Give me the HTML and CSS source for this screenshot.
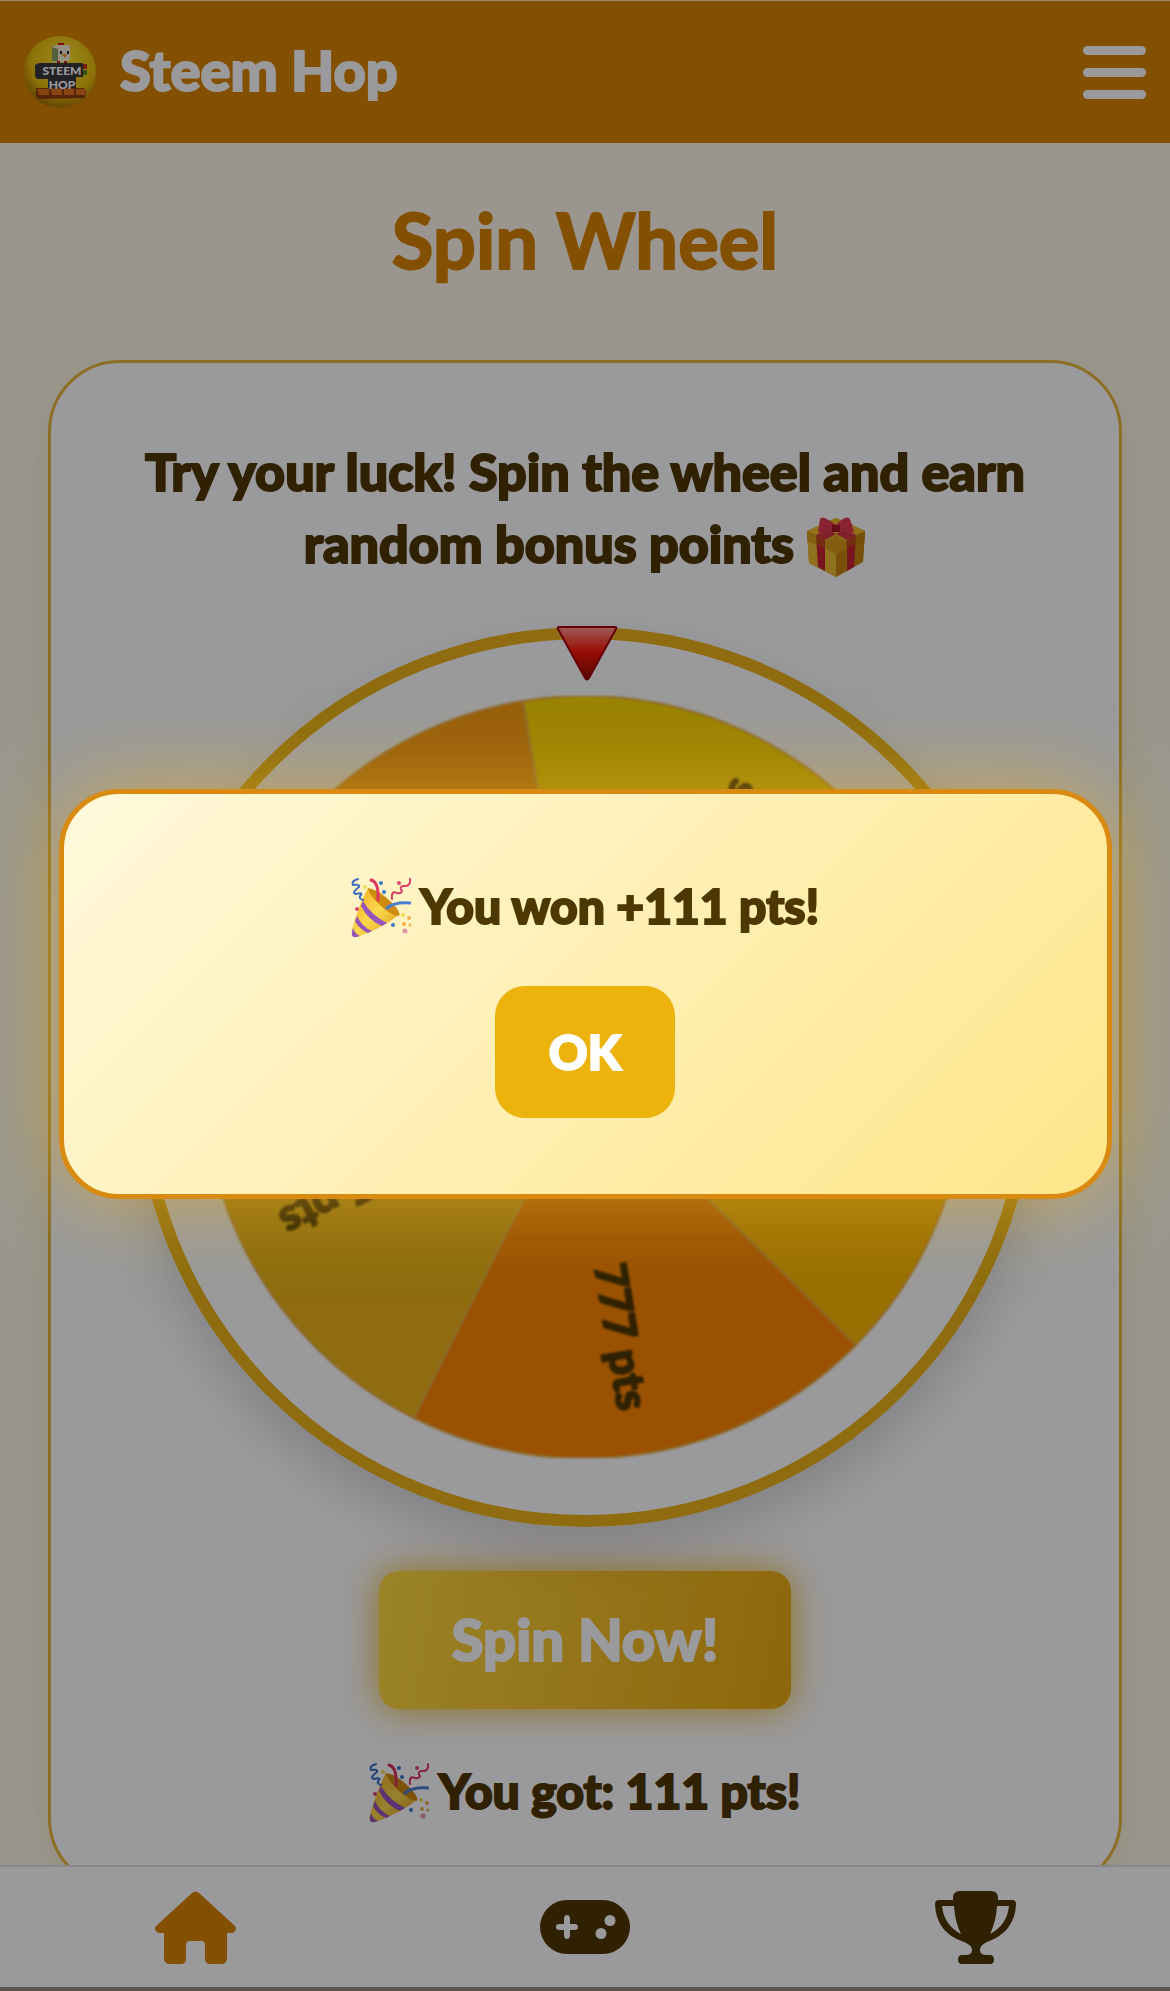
FILE: index.html
```html
<!DOCTYPE html>
<html lang="en">
<head>
    <meta charset="UTF-8">
    <meta name="viewport" content="width=device-width, initial-scale=1.0">
    <title>Steem Hop</title>
    <link rel="stylesheet" href="styles.css">
</head>
<body>
    <!-- Shared drawings -->
    <svg class="sprite" aria-hidden="true">
        <defs>
            <linearGradient id="coneFill" x1="0" y1="0" x2="1" y2="1">
                <stop offset="0" stop-color="#f0a818"/>
                <stop offset=".5" stop-color="#fbd84e"/>
                <stop offset="1" stop-color="#d8930c"/>
            </linearGradient>
        </defs>
        <symbol id="party" viewBox="0 0 60 60">
            <path d="M17 10 L49 36 Q30 51 6 59 Q-1 60 1 52 Q7 29 17 10Z" fill="url(#coneFill)"/>
            <path d="M17 10 Q26 11 38 22 Q50 33 48 38 Q39 37 29 27 Q18 17 17 10Z" fill="#cf8b10"/>
            <path d="M12 23 Q20 37 36 45 L31 48 Q17 42 10 28Z" fill="#9655bd"/>
            <path d="M6 38 Q11 49 21 53 L17 55 Q8 51 4 43Z" fill="#9655bd"/>
            <path d="M2 50 Q4 56 9 58 L5 59 Q0 60 1 54Z" fill="#9655bd"/>
            <g fill="none" stroke-linecap="round">
                <path d="M7 1 Q0 3 2 7 Q9 6 8 9 Q0 15 5 16 Q13 14 9 18 Q8 21 12 22" stroke="#3a6fc4" stroke-width="2"/>
                <path d="M20 2 Q28 4 27 22" stroke="#db3560" stroke-width="3"/>
                <path d="M59 1 Q60 9 52 8 Q48 9 51 13 Q50 16 46 15 Q40 12 41 21" stroke="#dc3b66" stroke-width="2"/>
                <path d="M36 30 Q43 24 59 25" stroke="#4a7fd0" stroke-width="3"/>
            </g>
            <g fill="#3a79cc"><circle cx="30" cy="5" r="2"/><circle cx="33" cy="14" r="2"/><circle cx="42" cy="47" r="2"/></g>
            <g fill="#d94870"><circle cx="48" cy="5" r="2"/><circle cx="6" cy="31" r="2"/><circle cx="54" cy="53" r="2.5" fill="#e295a8"/></g>
            <g fill="#efb24a"><circle cx="58" cy="40" r="2"/><circle cx="53" cy="46" r="2"/><circle cx="59" cy="47" r="1.5"/><circle cx="52" cy="37" r="2" fill="#f3da55"/><circle cx="14" cy="9" r="2" fill="#f3da55"/></g>
        </symbol>
    </svg>

    <div class="app">
        <header class="topbar">
            <a class="brand" href="#">
                <svg class="brand-logo" viewBox="0 0 72 72" aria-hidden="true">
                    <defs>
                        <radialGradient id="ball" cx=".55" cy=".35" r=".65">
                            <stop offset="0" stop-color="#ffe62e"/>
                            <stop offset=".7" stop-color="#e9bd0c"/>
                            <stop offset="1" stop-color="#a87405"/>
                        </radialGradient>
                    </defs>
                    <circle cx="36" cy="36" r="36" fill="url(#ball)"/>
                    <path d="M34 7h6v4h-6z" fill="#c8200f"/>
                    <path d="M28 11l4-2h14v15l-4 2H28z" fill="#f5eed2"/>
                    <path d="M28 11l6 2v12h-6z" fill="#8c9c66"/>
                    <path d="M36 15h2v3h-2zM43 15h2v3h-2z" fill="#222"/>
                    <path d="M38 18h5l-2 4z" fill="#f08a1c"/>
                    <path d="M33 25h3v3h-3zM40 25h3v3h-3z" fill="#c8200f"/>
                    <path d="M11 29l4-2h44v14h-7v13H24V43H13l-2-3z" fill="#38383a"/>
                    <path d="M59 28h4v5h-4z" fill="#c23a10"/><path d="M59 34h4v5h-4z" fill="#4c8a24"/>
                    <path d="M12 52h48l2 3-1 7-46 1-3-3z" fill="#8e3d0c"/>
                    <path d="M13 53h12v6H15zM27 53h11v6H28zM40 53h10v6H40zM52 53h9v6h-9z" fill="#e2741c"/>
                    <text x="38" y="39" text-anchor="middle" class="logo-text">STEEM</text>
                    <text x="38" y="53" text-anchor="middle" class="logo-text">HOP</text>
                </svg>
                <span class="brand-name">Steem Hop</span>
            </a>
            <button class="menu-btn" type="button" aria-label="Menu">
                <span></span><span></span><span></span>
            </button>
        </header>

        <main class="content">
            <h1>Spin Wheel</h1>

            <section class="card">
                <p class="lead">Try your luck! Spin the wheel and earn random bonus points
                    <svg class="emoji" viewBox="0 0 60 60" role="img" aria-label="gift">
                        <path d="M1 14L30 1l29 13-2 30-27 16L3 46z" fill="#d49a18"/>
                        <path d="M1 14L30 28v32L3 46z" fill="#eebd32"/>
                        <path d="M59 14L30 28v32l27-15z" fill="#c9860e"/>
                        <path d="M1 14L30 1l29 13-29 15z" fill="#f2bd2e"/>
                        <path d="M10 18l9 5v31l-7-4zM50 18l-9 5v31l7-4z" fill="#c9232f"/>
                        <path d="M10 18L40 5l7 3-28 15zM50 18L20 5l-6 3 27 15z" fill="#d43743"/>
                        <path d="M1 14l29 14 29-14v10L30 36 1 24z" fill="#b87808" opacity=".45"/>
                        <path d="M20 24l10-6 10 6v8l-10 5-10-5z" fill="#d99c18"/>
                        <path d="M30 8Q16-3 14 2L12 15q6 3 18-3 12 6 18 3L44 2Q40-3 30 8z" fill="#e33b50"/>
                        <path d="M26 8h8v7h-8z" fill="#a81728"/>
                    </svg>
                </p>

                <div class="wheel">
                    <svg class="wheel-face" viewBox="-381 -381 762 762" role="img" aria-label="Prize wheel">
                        <!-- five slices of 72 degrees -->
                        <g stroke="#e8b04a" stroke-width="2">
                            <path d="M0 0L-62 -376A381 381 0 0 1 338 -175Z" fill="#ffd900"/>
                            <path d="M0 0L338 -175A381 381 0 0 1 271 268Z" fill="#ffbb00"/>
                            <path d="M0 0L271 268A381 381 0 0 1 -171 341Z" fill="#ff8800"/>
                            <path d="M0 0L-171 341A381 381 0 0 1 -377 -57Z" fill="#ebb516"/>
                            <path d="M0 0L-377 -57A381 381 0 0 1 -62 -376Z" fill="#fb9d10"/>
                        </g>
                        <g class="wheel-labels">
                            <text x="336" y="22" transform="rotate(-63.4)">111 pts</text>
                            <text x="336" y="22" transform="rotate(8.6)">333 pts</text>
                            <text x="336" y="22" transform="rotate(80.6)">777 pts</text>
                            <text x="336" y="22" transform="rotate(152.6)">555 pts</text>
                            <text x="336" y="22" transform="rotate(224.6)">999 pts</text>
                        </g>
                    </svg>
                    <svg class="pointer" viewBox="0 0 62 56" aria-hidden="true">
                        <defs>
                            <linearGradient id="red" x1="0" y1="0" x2="0" y2="1">
                                <stop offset="0" stop-color="#ff9a94"/>
                                <stop offset=".45" stop-color="#ff1a08"/>
                                <stop offset="1" stop-color="#8c0800"/>
                            </linearGradient>
                        </defs>
                        <path d="M3 2h56q2 0 1 2L33 53q-2 3-4 0L2 4Q1 2 3 2z" fill="url(#red)" stroke="#a8000c" stroke-width="2"/>
                    </svg>
                </div>

                <button class="spin-btn" type="button">Spin Now!</button>

                <p class="result"><svg class="emoji" role="img" aria-label="party popper"><use href="#party"/></svg> You got: 111 pts!</p>
            </section>
        </main>

        <nav class="tabbar">
            <a class="active" href="#" aria-label="Home">
                <svg class="icon-home" viewBox="0 0 81 73">
                    <path d="M37 2q3-3 7 0l36 33q2 3 0 5-1 2-4 2h-4v25q0 6-6 6H55q-5 0-5-6V54q0-4-4-4H35q-4 0-4 4v13q0 6-5 6H15q-6 0-6-6V42H5q-3 0-4-2-2-2 0-5z" fill="currentColor"/>
                </svg>
            </a>
            <a href="#" aria-label="Games">
                <svg class="icon-game" viewBox="0 0 90 54">
                    <path fill="currentColor" fill-rule="evenodd" d="M27 0h36a27 27 0 0 1 0 54H27a27 27 0 0 1 0-54zM27 15q-3 0-3 4v5h-5q-3 0-3 3t3 3h5v5q0 4 3 4t3-4v-5h5q3 0 3-3t-3-3h-5v-5q0-4-3-4zM70 15a5.500 5.500 0 1 0 0 11 5.500 5.500 0 1 0 0-11zM61 28a5.500 5.500 0 1 0 0 11 5.500 5.500 0 1 0 0-11z"/>
                </svg>
            </a>
            <a href="#" aria-label="Leaderboard">
                <svg class="icon-cup" viewBox="0 0 81 73">
                    <path fill="currentColor" fill-rule="evenodd" d="M25 0h31q7 0 7 7v2h14q4 0 4 4-1 28-29 38-7 3-7 8 0 5 6 5h4q4 0 4 4.500t-4 4.500H27q-4 0-4-4.500t4-4.500h4q6 0 6-5 0-5-8-8Q1 42 0 13q0-4 4-4h14V7q0-7 7-7zM7 15q2 19 19 28-6-12-7-28zM74 15H62q-1 16-7 28 17-9 19-28z"/>
                </svg>
            </a>
        </nav>
    </div>

    <div class="overlay">
        <div class="dialog" role="dialog" aria-modal="true" aria-labelledby="winText">
            <p id="winText"><svg class="emoji" role="img" aria-label="party popper"><use href="#party"/></svg> You won +111 pts!</p>
            <button class="ok-btn" type="button">OK</button>
        </div>
    </div>
</body>
</html>
```
FILE: styles.css
```css
* {
    box-sizing: border-box;
}

body {
    margin: 0;
    font-family: Lato, "Open Sans", sans-serif;
    font-weight: 900;
    color: #4d3800;
    background-color: #fffbeb;
}

button {
    font: inherit;
    border: none;
    cursor: pointer;
}

/* thicken the lettering a little */
h1,
p,
.brand-name,
.spin-btn,
.ok-btn {
    -webkit-text-stroke: 2px currentColor;
}

.sprite {
    position: absolute;
    width: 0;
    height: 0;
}

.app {
    display: flex;
    flex-direction: column;
    height: 100vh;
    overflow: hidden;
    border-top: 1px solid #ffe3b0;
    border-bottom: 4px solid #988e84;
}

/* Header */
.topbar {
    display: flex;
    flex: none;
    align-items: center;
    justify-content: space-between;
    padding: 35px 24px;
    background-color: #d98600;
}

.brand {
    display: flex;
    align-items: center;
    gap: 24px;
    color: #fff;
    text-decoration: none;
}

.brand-logo {
    width: 72px;
    height: 72px;
}

.logo-text {
    font-size: 12px;
    fill: #fff;
}

.brand-name {
    padding-bottom: 4px;
    font-size: 56px;
    line-height: 68px;
}

.menu-btn {
    display: flex;
    flex-direction: column;
    gap: 13px;
    width: 63px;
    padding: 0;
    background: none;
}

.menu-btn span {
    height: 9px;
    border-radius: 5px;
    background-color: #fff;
}

/* Page */
.content {
    flex: 1;
    min-height: 0;
    overflow: hidden;
    padding: 49px 48px 0;
}

h1 {
    margin: 0 0 72px;
    font-size: 76px;
    line-height: 96px;
    text-align: center;
    color: #d98600;
}

.card {
    display: flex;
    flex-direction: column;
    align-items: center;
    padding: 72px 72px 60px;
    border: 3px solid #e8b83c;
    border-radius: 72px;
    background-color: #fff;
    box-shadow: 0 12px 36px rgba(200, 180, 60, 0.2);
}

.lead,
.result,
.dialog p {
    margin: 0;
    font-size: 48px;
    line-height: 72px;
    text-align: center;
}

.lead {
    font-size: 52px;
}

.emoji {
    width: 60px;
    height: 60px;
    vertical-align: -14px;
}

/* Wheel */
.wheel {
    position: relative;
    width: 900px;
    max-width: 100%;
    aspect-ratio: 1;
    margin: 48px 0 44px;
    padding: 57px;
    border: 12px solid #ebb516;
    border-radius: 50%;
    box-shadow: 0 24px 48px rgba(0, 0, 0, 0.15);
}

.wheel-face {
    display: block;
    width: 100%;
    filter: blur(1px);
}

.wheel-labels {
    font-size: 44px;
    text-anchor: end;
    fill: #4d3800;
    stroke: #4d3800;
    stroke-width: 2px;
}

.pointer {
    position: absolute;
    top: -14px;
    left: 50%;
    width: 62px;
    margin-left: -29px;
}

.spin-btn {
    padding: 32px 73px 34px;
    border-radius: 20px;
    font-size: 58px;
    line-height: 72px;
    color: #fff;
    background: linear-gradient(100deg, #ffdb40, #ebab10);
    box-shadow: 0 0 36px rgba(235, 180, 20, 0.9);
}

.result {
    margin-top: 46px;
}

/* Bottom navigation */
.tabbar {
    display: grid;
    flex: none;
    grid-template-columns: repeat(3, 1fr);
    height: 122px;
    border-top: 2px solid #e4e2e6;
    background-color: #fff;
}

.tabbar a {
    display: flex;
    align-items: center;
    justify-content: center;
    color: #4d3800;
}

.tabbar .active {
    color: #d98600;
}

.icon-home,
.icon-cup {
    width: 81px;
}

.icon-game {
    width: 90px;
}

/* Win dialog */
.overlay {
    position: fixed;
    inset: 0;
    display: flex;
    align-items: center;
    justify-content: center;
    padding-bottom: 4px;
    background-color: rgba(2, 0, 4, 0.4);
}

.dialog {
    display: flex;
    flex-direction: column;
    align-items: center;
    gap: 44px;
    width: 90%;
    padding: 76px 72px;
    border: 5px solid #d98a10;
    border-radius: 60px;
    background: linear-gradient(135deg, #fff9dc, #ffe68a);
    box-shadow: 0 0 84px rgba(235, 180, 40, 0.6);
}

.ok-btn {
    padding: 30px 54px;
    border-radius: 30px;
    font-size: 48px;
    line-height: 72px;
    color: #fff;
    background-color: #ebb30c;
}
```
